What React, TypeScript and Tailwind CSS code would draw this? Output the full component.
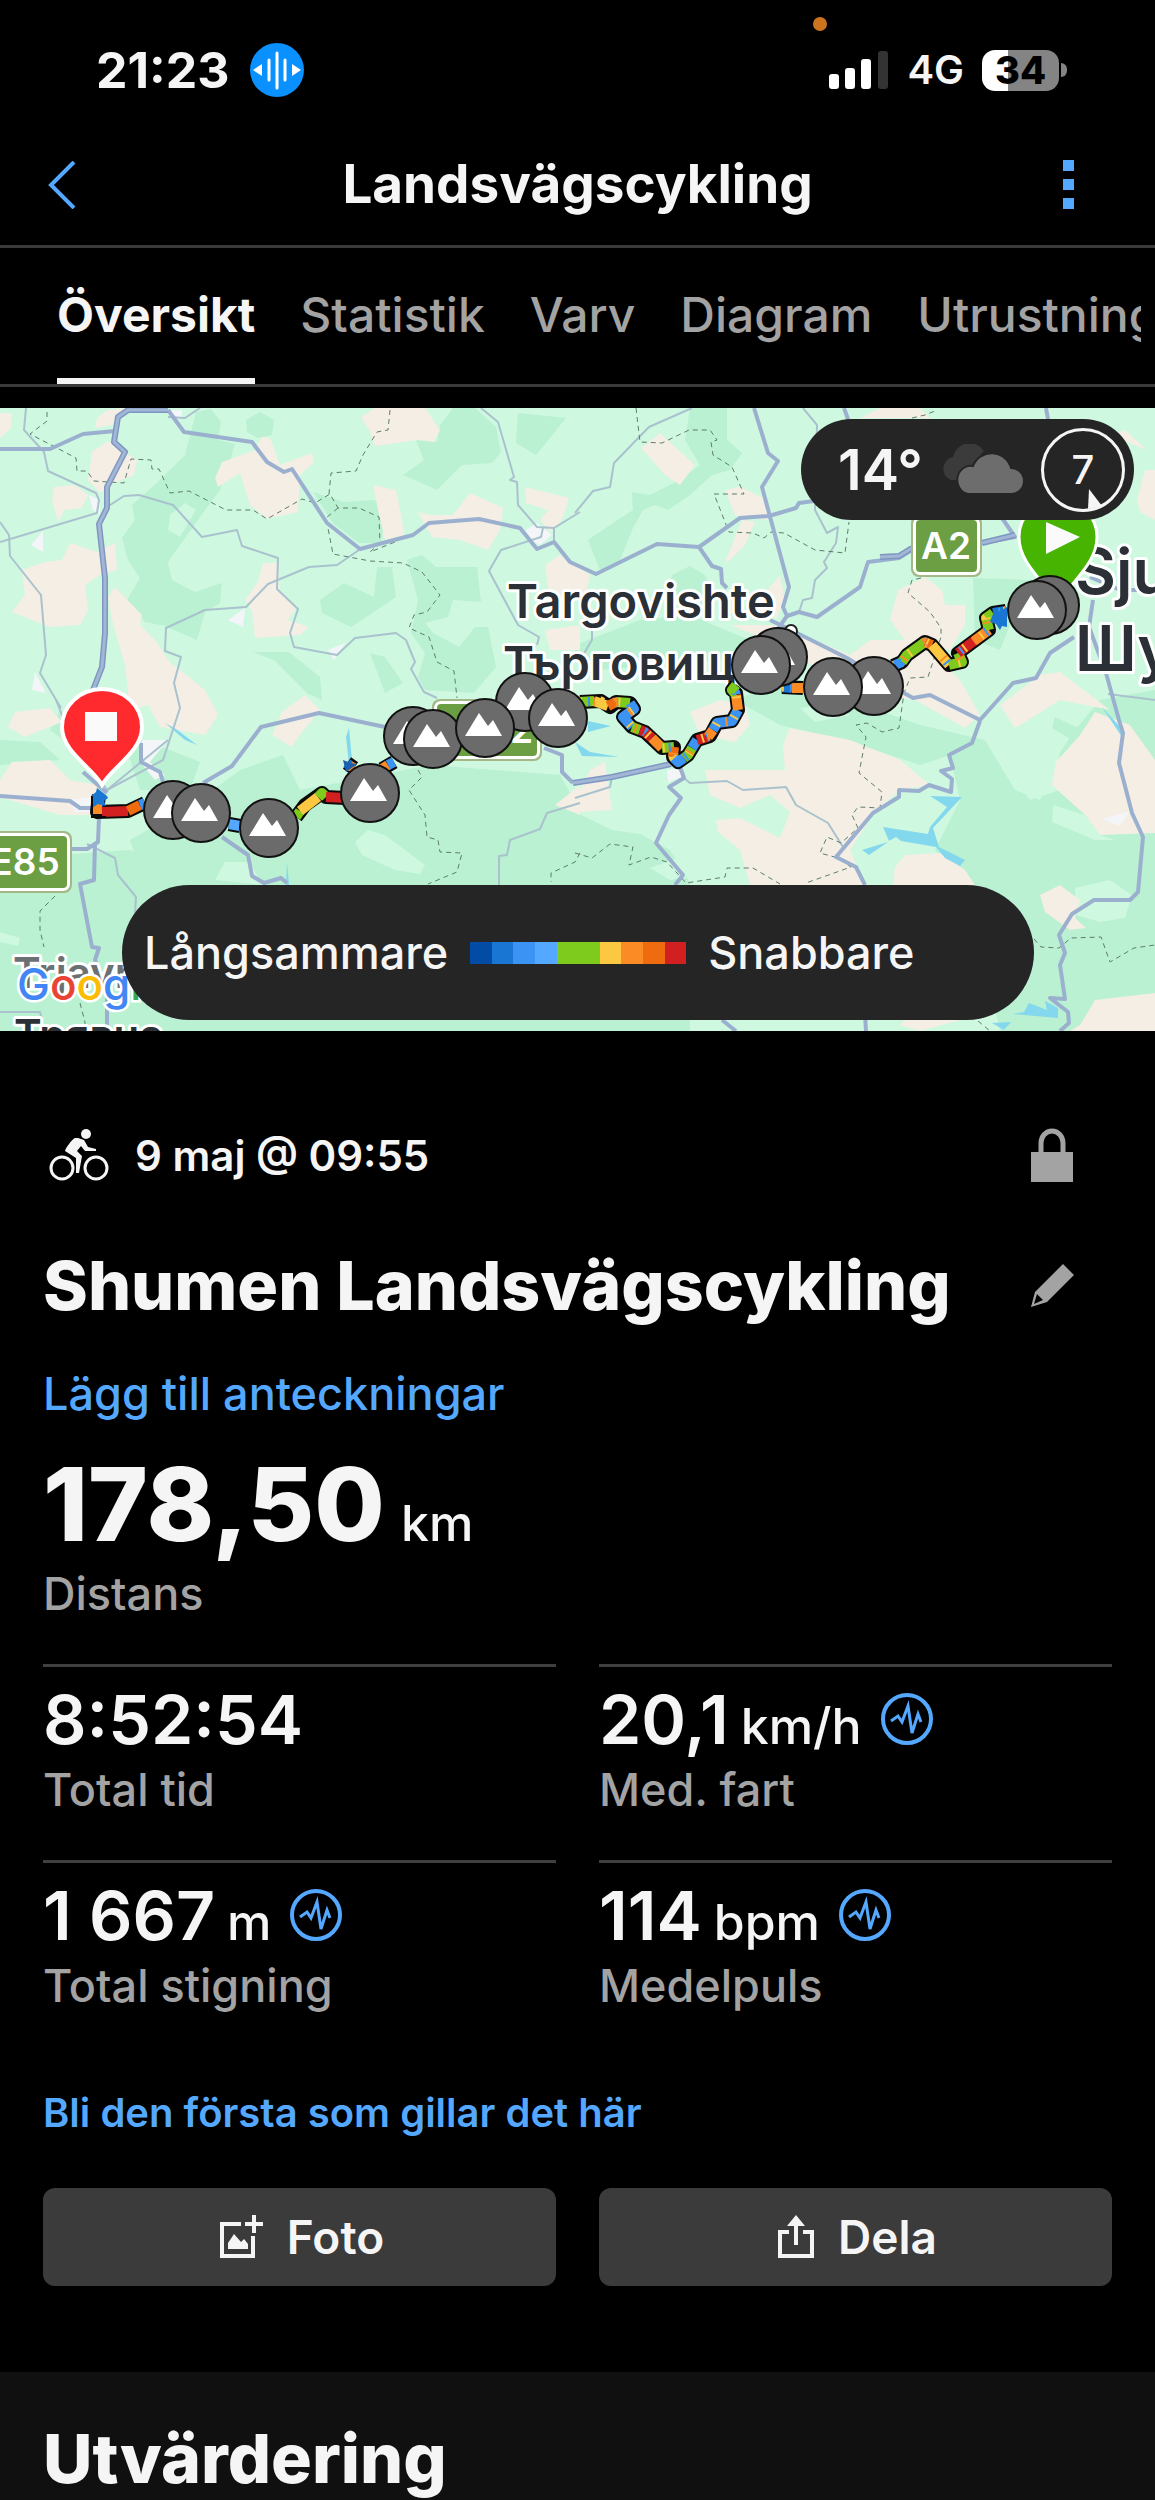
import { useState } from 'react'
import type { ReactNode } from 'react'

const TABS = ['Översikt', 'Statistik', 'Varv', 'Diagram', 'Utrustning']

const SPEED_SCALE = [
  '#024ca5',
  '#1976d2',
  '#3b94f3',
  '#54a8ff',
  '#7fcb1d',
  '#7fcb1d',
  '#fcc842',
  '#fb8b24',
  '#ee6b10',
  '#d21f1f',
]

// --- Map data, in map units (1155 wide) ---

const FOREST = [
  '196,412 211,409 221,422 218,440 235,444 228,468 220,490 205,510 180,545 168,562 172,580 195,592 222,583 220,603 205,612 197,640 165,626 145,622 127,600 140,578 128,560 122,538 135,520 132,505 158,482 185,455',
  '246,420 260,412 274,420 272,435 258,438 247,432',
  '416,440 437,442 440,425 453,408 475,408 496,427 501,452 492,463 462,465 437,490 403,475 424,460',
  '518,413 566,418 536,455 516,443',
  '313,492 344,502 374,500 385,510 381,543 359,543 333,523',
  '344,583 374,597 377,567 392,567 396,597 351,627 322,613 320,600',
  '407,560 422,555 436,567 477,567 481,602 453,600 448,617 425,623 433,633 459,647 475,627 488,627 496,667 474,693 425,690 418,677 425,653 411,633 418,600',
  '253,652 289,652 320,677 322,700 307,693 274,660',
  '370,653 385,657 403,683 385,693',
  '690,408 727,408 727,440 742,453 730,470 712,475 690,495 668,510 655,505 643,510 633,528 620,560 600,570 588,540 610,525 633,510 632,492 650,495 680,480 700,465 685,440',
  '575,645 640,620 690,615 730,632 750,640 720,660 600,670 575,655',
  '672,575 690,566 705,575 715,600 690,610 668,590',
  '973,578 1030,580 1045,600 1010,625 1000,650 975,640',
  '735,700 780,682 850,700 920,725 985,740 1030,800 1060,790 1055,760 1075,730 1100,700 1155,690 1155,1031 1000,1031 965,880 935,850 960,800 950,755 920,765 860,745 780,725',
  '575,812 612,830 640,834 670,850 690,883 690,1031 575,1031',
  '0,868 60,855 130,850 200,885 150,1031 0,1031',
  '130,840 200,800 240,770 283,755 300,790 380,775 430,765 560,775 580,810 580,1031 100,1031 150,900',
  '122,735 170,750 200,762 190,790 140,790',
  '60,710 75,720 70,745 50,730',
  '0,740 40,742 60,760 0,765',
  '1055,717 1093,735 1092,752 1052,728',
]

const MEADOW = [
  '355,842 368,830 385,835 425,865 420,874 395,870 362,855',
  '985,740 1010,715 1055,735 1060,760 1040,800 1015,790',
  '170,515 185,503 196,510 180,537 168,530',
  '0,932 20,938 18,946 0,942',
  '215,880 225,862 250,862 262,885',
  '650,868 700,850 712,860 700,875 670,880',
  '1053,805 1085,815 1100,835 1115,840 1095,840 1052,822',
  '1075,888 1110,880 1132,895 1125,918 1100,922 1076,915',
  '800,708 830,705 850,715 815,722',
]

const FIELDS = [
  '92,452 108,441 125,452 137,460 134,475 112,484 100,493 88,480',
  '54,487 75,485 88,495 82,508 65,510 58,522 52,500',
  '97,418 107,410 125,408 112,425 95,428',
  '0,413 12,413 11,428 0,438',
  '361,417 375,408 425,408 440,430 434,442 418,440 375,446 370,432',
  '215,478 222,462 255,450 262,437 270,438 280,465 312,453 314,462 300,475 298,512 267,519 250,505 240,473 218,487',
  '373,485 396,490 402,520 404,535 385,540 378,510',
  '418,512 430,515 453,515 470,493 503,508 500,530 488,550 460,540 432,537 425,525',
  '525,487 569,498 562,520 550,532 540,520 548,510 526,503',
  '70,543 97,552 115,543 117,570 100,575 85,585 88,610 80,625 50,627 12,612 25,595 22,570 45,562 62,560',
  '115,587 142,615 140,625 155,640 170,662 205,690 218,715 205,735 160,727 148,705 130,710 125,665 112,620 108,597',
  '263,563 278,563 280,590 297,607 288,620 309,627 300,635 255,638 252,612 245,600 258,582',
  '282,712 305,695 320,710 300,735 292,747 272,735',
  '545,565 560,555 590,575 585,600 550,600',
  '545,630 580,625 580,650 550,650',
  '15,712 50,708 62,722 25,737 8,727',
  '0,780 12,762 50,760 70,780 98,785 90,815 60,815 0,797',
  '641,448 660,433 695,465 680,485 665,475',
  '725,490 740,487 768,500 768,520 735,515',
  '725,562 742,520 755,522 745,545 730,560',
  '768,590 780,575 785,600 775,620',
  '890,620 898,590 925,577 942,590 945,605 965,605 965,625 950,650 905,640',
  '730,625 780,625 850,655 870,640 920,640 960,680 980,715 965,728 915,700 850,690 820,670 780,645',
  '1110,435 1125,430 1147,450',
  '1137,500 1145,470 1155,470 1155,520 1140,512',
  '1040,675 1060,672 1110,710 1060,700 1015,728 1000,705',
  '860,418 880,408 920,408 930,418',
  '790,728 850,740 900,760 930,785 900,790 875,812 850,850 865,885 750,885 740,850 718,832 716,820 740,818 780,838 790,812 770,795 740,808 710,795 705,770 785,770 783,745',
  '895,867 905,855 940,853 965,870 975,885 893,885',
  '1052,785 1056,762 1080,735 1095,712 1130,725 1155,760 1155,833 1100,835 1085,815',
  '1040,895 1060,885 1080,900 1075,918 1086,928 1070,930 1045,912',
  '1080,1025 1095,1000 1155,993 1155,1031 1070,1031',
  '690,712 720,700 745,705 750,725 735,742 700,735',
  '575,800 590,770 605,762 612,810 580,812',
  '555,805 580,785 580,815',
  '905,1020 960,1020 920,1031 900,1025',
]

const TOWNS = [
  '31,545 43,531 43,552',
  '228,620 245,608 243,627',
  '328,650 345,643 334,660',
  '526,530 537,523 552,535 540,545 527,538',
  '89,495 100,500 100,515 93,510',
  '168,410 182,410 182,418 172,420',
  '32,690 35,672 46,693',
  '142,740 168,740 150,762 165,775 155,780 140,762',
  '667,770 680,768 684,776 668,782',
  '1102,819 1130,811 1120,826',
  '70,800 90,797 90,812 75,812',
]

const LAKES = [
  '165,723 176,729 197,745 185,740',
  '346,737 349,728 352,760 349,765',
  '287,862 289,885 286,885',
  '930,796 962,797 933,828 939,847 965,860 960,866 945,858 936,847 901,841 896,837 889,841 883,827 928,834 930,827 947,807',
  '862,850 888,842 869,855',
  '1102,707 1123,730 1122,737',
  '1013,1014 1024,1012 1029,1003 1047,1010 1045,1001 1058,1008 1058,1018',
  '992,1023 1011,1022 1004,1030',
  '588,721 611,726 588,732',
  '575,742 590,752 619,757 582,756',
]

const MINOR_ROADS = [
  '26,408 24,430 44,452 48,471 96,493 99,500 97,513 0,542',
  '0,522 9,535 10,556 41,595 46,655 40,673 61,708',
  '107,507 124,496 139,495 173,505 202,537 237,530 242,546 278,558 277,589 298,609 290,633 294,647 337,655 355,638 396,633 406,640 415,662 411,669 424,692 437,698',
  '359,550 337,565 309,567 268,584 246,607 205,610 166,628 165,651 181,657 174,683 180,708 163,760 107,790',
  '481,408 498,422 514,477 510,480 517,482 518,505 537,527 554,528 554,542',
  '554,528 580,512',
  '543,528 541,537 501,550 489,571 518,625 539,637 537,645',
  '168,417 185,418 200,408',
  '56,700 70,735 107,790 168,740',
  '87,844 115,858 118,875 136,897 135,913',
  '580,803 547,813 540,829 510,840 507,855 499,856 499,885',
  '684,778 690,783 727,781 743,790 786,787 796,805 828,823 843,847',
  '692,408 649,427 614,463 610,487 593,491 575,513',
  '803,408 817,425 815,510 827,533 838,527 836,543 824,562 827,568 815,580 812,598 803,600 799,612',
  '575,798 610,787 612,777',
  '592,620 592,640 580,660',
  '1108,694 1155,700',
  '0,1012 40,1012 42,1020',
]

const MAJOR_ROADS = [
  '0,449 50,449 83,434 115,431',
  '168,410 184,432 252,442 267,462 284,472 292,469 327,523 360,549 413,535 429,523 479,519 520,528 537,549 554,542 570,562 596,574 657,544 699,547 740,518 769,516 796,508 799,503 814,501',
  '754,408 768,453 778,461 762,487 789,587 783,607 787,616 770,640',
  '699,547 712,566 721,569 722,583 727,588',
  '787,616 799,612 817,617 860,587 868,562 899,558 912,550 982,543 1015,537 1000,515',
  '844,408 852,430',
  '1046,408 1050,430',
  '770,620 797,633 847,658 904,693 913,698 930,695 980,720 1013,683 1036,678 1050,653 1074,637',
  '1093,600 1089,627 1106,673 1119,720 1123,733 1119,763 1132,813 1143,837 1138,892 1130,900 1094,900 1072,914 1059,935 1065,953 1060,965 1065,999 1050,998 1068,1012 1069,1023 1060,1031',
  '980,721 972,743 949,755 953,768 941,771 952,779 951,792 929,785 919,791 899,790 899,797 873,813 836,857 856,867 865,885',
  '680,767 684,778 669,787 681,798 669,815 656,843 683,875 675,885',
  '0,796 70,801 80,808 92,808',
  '99,817 98,842 87,849 70,849',
  '95,843 94,880 80,884 92,947 99,948 95,960 107,990 107,1031',
  '141,743 141,762 160,772 163,782',
  '83,772 107,793',
  '203,783 232,766 261,727 319,713 385,727',
  '222,837 248,855 252,876 264,883 281,878 287,883',
  '544,748 562,755 562,772 573,783',
  '722,1020 736,1031',
  '865,1015 866,1031',
  '1090,577 1120,590 1155,590',
]

const HIGHWAYS = [
  '168,410 128,410 118,417 114,442 125,452 107,487 107,508 99,524 105,578 105,633 102,667 93,690',
  '573,783 612,777 671,764',
  '880,557 899,556 912,548',
  '982,543 1015,535',
]

const BORDERS = [
  '47,412 47,421 30,434 76,458 77,471 87,471 94,481 124,483 131,459 151,460 152,469 159,469 170,493 189,491 226,510 253,510 267,519 302,499 315,503 330,494 338,508 359,508 379,517 380,543 370,552 395,542',
  '390,410 388,430 377,432 363,455 356,471 331,473 329,494',
  '338,508 326,518 333,554 370,561 403,563 422,572 440,595 427,612 414,615 409,628 429,637 437,662 454,671 457,698',
  '636,408 640,442 662,443 689,430 710,430 717,440 711,442 713,455 732,467 744,494 714,494 729,532 753,533 764,538 771,532 784,533 815,550 845,553 849,522',
  '921,578 912,580 908,593 930,612 941,628 941,637 928,677 910,678 904,693 899,728 882,732 867,723 856,725 866,737 859,773 882,792 880,808 858,807 852,815 858,828 841,843 827,837 820,853 838,858 851,867 806,883',
  '575,853 592,858 610,844 633,847 629,865 651,857 667,862 686,883 725,877 727,868 753,868 780,884',
  '1034,939 1041,947 1059,948 1071,938 1101,937 1110,962 1134,948 1155,945',
  '418,770 422,777 409,790 425,815 427,837 438,840 440,852 462,853 457,872 428,884',
  '55,896 40,911 40,930 44,947',
  '80,1003 85,1022 85,1031',
  '580,853 575,862 551,873 551,882',
  '912,418 925,415 935,411',
  '978,1021 990,1031',
]

type Leg = { points: string; color: string }

const TRACK_OUTLINE = [
  '99,795 97,812 128,811 145,803',
  '229,824 240,826',
  '296,817 305,805 322,793 326,797 345,798',
  '347,763 354,768',
  '382,769 394,762',
  '580,702 601,701 610,707 616,702 630,703 634,709 623,717 632,727 645,732 662,748 674,747 673,757 678,762 688,755 697,740 710,736 717,723 732,721 738,710 736,693 732,690 736,685',
  '782,687 803,688',
  '893,666 902,662 907,655 925,642 932,645 949,665 962,662 958,653 989,630 986,618 993,613 1006,611',
]

const TRACK_LEGS: Leg[] = [
  { points: '99,795 98,806', color: '#1976d2' },
  { points: '97,804 97,814', color: '#fb8b24' },
  { points: '102,812 128,811', color: '#d21f1f' },
  { points: '128,811 140,805', color: '#ee6b10' },
  { points: '140,805 145,803', color: '#3b94f3' },
  { points: '229,824 240,826', color: '#54a8ff' },
  { points: '296,817 300,811', color: '#7fcb1d' },
  { points: '300,811 318,797', color: '#fcc842' },
  { points: '318,797 322,793 326,797', color: '#7fcb1d' },
  { points: '326,797 345,798', color: '#d21f1f' },
  { points: '347,763 350,766', color: '#1976d2' },
  { points: '350,766 354,768', color: '#fb8b24' },
  { points: '382,769 388,765', color: '#fb8b24' },
  { points: '388,765 394,762', color: '#3b94f3' },
  { points: '580,702 594,701', color: '#7fcb1d' },
  { points: '594,701 608,706', color: '#fcc842' },
  { points: '608,706 616,702', color: '#ee6b10' },
  { points: '616,702 630,703', color: '#7fcb1d' },
  { points: '630,703 634,709 623,717 632,727', color: '#3b94f3' },
  { points: '632,727 640,730', color: '#7fcb1d' },
  { points: '640,730 645,732 652,738', color: '#d21f1f' },
  { points: '652,738 662,748', color: '#fb8b24' },
  { points: '662,748 674,747', color: '#7fcb1d' },
  { points: '674,747 673,757', color: '#ee6b10' },
  { points: '673,757 678,762 684,758', color: '#3b94f3' },
  { points: '684,758 688,755 692,748', color: '#7fcb1d' },
  { points: '692,748 697,740', color: '#3b94f3' },
  { points: '697,740 708,737', color: '#d21f1f' },
  { points: '708,737 713,730', color: '#fb8b24' },
  { points: '713,730 717,723 732,721 738,710', color: '#3b94f3' },
  { points: '738,710 736,695', color: '#fb8b24' },
  { points: '736,695 732,690 736,685', color: '#7fcb1d' },
  { points: '782,687 792,688', color: '#1976d2' },
  { points: '792,688 803,688', color: '#fb8b24' },
  { points: '893,666 902,662', color: '#3b94f3' },
  { points: '902,662 907,655 925,642', color: '#7fcb1d' },
  { points: '925,642 932,645', color: '#ee6b10' },
  { points: '932,645 949,665', color: '#fcc842' },
  { points: '949,665 962,662 958,653', color: '#7fcb1d' },
  { points: '958,653 974,641', color: '#d21f1f' },
  { points: '974,641 989,630', color: '#fb8b24' },
  { points: '989,630 986,618 993,613', color: '#7fcb1d' },
  { points: '993,613 1006,611', color: '#1976d2' },
]

const SUMMITS: [number, number][] = [
  [173, 810],
  [201, 813],
  [269, 828],
  [370, 793],
  [413, 736],
  [433, 739],
  [525, 702],
  [485, 728],
  [558, 718],
  [778, 657],
  [761, 665],
  [874, 686],
  [833, 687],
  [1050, 605],
  [1037, 610],
]

function Lines({ items, ...rest }: { items: string[]; stroke: string; strokeWidth: number; strokeDasharray?: string }) {
  return (
    <g fill="none" strokeLinejoin="round" {...rest}>
      {items.map((points) => (
        <polyline key={points} points={points} />
      ))}
    </g>
  )
}

function Areas({ items, fill }: { items: string[]; fill: string }) {
  return (
    <g fill={fill}>
      {items.map((points) => (
        <polygon key={points} points={points} />
      ))}
    </g>
  )
}

function RoadSign({ x, y, width, textX, children }: { x: number; y: number; width: number; textX: number; children: string }) {
  return (
    <g>
      <rect x={x} y={y} width={width} height={62} rx={8} fill="#a3b886" />
      <rect x={x + 2} y={y + 2} width={width - 4} height={58} rx={7} fill="#fff" />
      <rect x={x + 5} y={y + 5} width={width - 10} height={52} rx={4} fill="#6c9f43" />
      <text x={textX} y={y + 44} fill="#fff" fontSize={37} fontWeight={600} textAnchor="middle">
        {children}
      </text>
    </g>
  )
}

function RouteMap() {
  return (
    <svg
      viewBox="0 408 1155 623"
      className="block w-full font-['Inter',sans-serif]"
      role="img"
      aria-label="Karta över rutten"
    >
      <rect x={0} y={408} width={1155} height={623} fill="#cff8e1" />
      <Areas items={FOREST} fill="#b9f1d2" />
      <Areas items={MEADOW} fill="#cff8e1" />
      <Areas items={FIELDS} fill="#f4eee4" />
      <Areas items={TOWNS} fill="#f3f5f8" />
      <Areas items={LAKES} fill="#84d8ee" />
      <Lines items={MINOR_ROADS} stroke="#a9c2cd" strokeWidth={2} />
      <Lines items={BORDERS} stroke="#5f7d6d" strokeWidth={1} strokeDasharray="5 4" />
      <Lines items={MAJOR_ROADS} stroke="#9bb0cf" strokeWidth={4} />
      <Lines items={HIGHWAYS} stroke="#7f97c0" strokeWidth={6} />
      <Lines items={HIGHWAYS} stroke="#a2b6d6" strokeWidth={3} />

      <RoadSign x={911} y={515} width={71} textX={946}>
        A2
      </RoadSign>
      <RoadSign x={-20} y={831} width={92} textX={25}>
        E85
      </RoadSign>
      <RoadSign x={432} y={699} width={110} textX={508}>
        A2
      </RoadSign>

      <g fill="#2b2f36" stroke="#fff" strokeWidth={6} strokeLinejoin="round" paintOrder="stroke" fontWeight={600}>
        <text x={507} y={618} fontSize={47}>
          Targovishte
        </text>
        <text x={503} y={680} fontSize={47}>
          Търговище
        </text>
        <text x={1075} y={594} fontSize={63}>
          Sjumen
        </text>
        <text x={1075} y={671} fontSize={63}>
          Шумен
        </text>
        <g fontSize={42}>
          <text x={13} y={988} fill="#6b7073">
            Trjavna
          </text>
          <text x={14} y={1050}>
            Трявна
          </text>
        </g>
      </g>
      <text x={17} y={1000} fontSize={44} fontWeight={500} stroke="#fff" strokeWidth={5} paintOrder="stroke">
        <tspan fill="#4285f4">G</tspan>
        <tspan fill="#ea4335">o</tspan>
        <tspan fill="#fbbc04">o</tspan>
        <tspan fill="#4285f4">g</tspan>
        <tspan fill="#34a853">l</tspan>
        <tspan fill="#ea4335">e</tspan>
      </text>

      <circle cx={791} cy={631} r={6} fill="#fff" stroke="#222" strokeWidth={2} />
      <g strokeLinejoin="miter">
        <Lines items={TRACK_OUTLINE} stroke="#0a0a0a" strokeWidth={14} />
      </g>
      <g fill="none" strokeWidth={10} strokeLinejoin="round">
        {TRACK_LEGS.map((leg) => (
          <polyline key={leg.points} points={leg.points} stroke={leg.color} />
        ))}
      </g>
      <Lines items={TRACK_OUTLINE.slice(5)} stroke="#fcc842" strokeWidth={9} strokeDasharray="2 19" />
      <Lines items={TRACK_OUTLINE.slice(5)} stroke="#3b94f3" strokeWidth={9} strokeDasharray="0 8 2 21" />
      <Lines items={TRACK_OUTLINE.slice(5)} stroke="#fb8b24" strokeWidth={9} strokeDasharray="0 13 2 11" />
      <path d="M91 796l5-4 1-4 5 4 5 4 1 2-4 3 2 5-8-2-6 4z" fill="#1976d2" />
      <path d="M92 796v21h14" fill="none" stroke="#0a0a0a" strokeWidth={2} />
      <path d="M343 760l8 3 6 1-4 3-7 5z" fill="#1b5fae" />
      <path d="M990 622l3-8 9-4 5-3v20l-5-1-2 4-4-6z" fill="#1976d2" />

      {/* finish */}
      <path
        d="M102 785C92 767 62 752 62 727a40 38 0 0 1 80 0c0 25-30 40-40 58z"
        fill="#ff2a2d"
        stroke="#fff"
        strokeWidth={4}
      />
      <rect x={85} y={712} width={32} height={29} fill="#fafafa" />

      {/* start */}
      <path
        d="M1058 606C1050 585 1019 566 1019 537a39 38 0 0 1 78 0c0 29-31 48-39 69z"
        fill="#46b400"
        stroke="#fff"
        strokeWidth={3}
      />
      <path d="M1046 522l34 15-34 17z" fill="#fafafa" />

      {SUMMITS.map(([x, y]) => (
        <g key={`${x}:${y}`} transform={`translate(${x} ${y})`}>
          <circle r={29} fill="#6b6b6b" stroke="#111" strokeWidth={2} />
          <path d="M-20 8L-6-15 3-2 8-8 17 8z" fill="#fff" />
        </g>
      ))}
    </svg>
  )
}

function PulseIcon() {
  return (
    <svg viewBox="0 0 54 54" className="size-[54px] self-center" fill="none" stroke="#54a8ff" aria-hidden="true">
      <circle cx={27} cy={27} r={24} strokeWidth={4} />
      <path d="M11 29l7-5 4 6 6-16 4 27 6-19 3 8" strokeWidth={3} />
    </svg>
  )
}

function CyclistIcon() {
  return (
    <svg viewBox="0 0 60 52" className="h-[52px] w-[60px]" aria-hidden="true">
      <g fill="none" stroke="#f5f5f5" strokeWidth={3}>
        <circle cx={13} cy={39} r={11} />
        <circle cx={47} cy={39} r={11} />
      </g>
      <circle cx={37} cy={5} r={5} fill="#f5f5f5" />
      <path
        d="M29 9l6 2 4 7 8 2v2H36l-4-5-4 5 5 5-3 17h-3V29l-11-7c0-2 7-12 10-13z"
        fill="#f5f5f5"
      />
    </svg>
  )
}

function StatusBar() {
  return (
    <div className="relative flex h-[124px] items-center justify-between pt-4 pr-[88px] pl-[96px]">
      <span className="absolute top-[17px] left-[71%] size-3.5 -translate-x-1/2 rounded-full bg-[#cc7320]" />
      <div className="flex items-center gap-5">
        <span className="text-[50px] font-bold">21:23</span>
        <svg viewBox="0 0 54 54" className="size-[54px]" aria-hidden="true">
          <circle cx={27} cy={27} r={27} fill="#0a91ff" />
          <path d="M3 27l9-6v12zM51 27l-9-6v12z" fill="#fff" />
          <path d="M19 17v20M27 10v35M35 17v20" stroke="#fff" strokeWidth={3} strokeLinecap="round" />
        </svg>
      </div>
      <div className="flex items-center gap-[18px]">
        <svg viewBox="0 0 60 40" className="h-10 w-[60px]" fill="#fff" aria-hidden="true">
          <rect x={0} y={24} width={10} height={15} rx={3} />
          <rect x={16} y={18} width={10} height={21} rx={3} />
          <rect x={32} y={9} width={10} height={30} rx={3} />
          <rect x={49} y={1} width={10} height={38} rx={3} fill="#333" />
        </svg>
        <span className="text-[40px] font-semibold">4G</span>
        <div className="flex items-center gap-0.5">
          <span className="flex h-[41px] w-[77px] items-center justify-center rounded-[13px] bg-linear-to-r from-white from-34% to-[#848484] to-34% text-[38px] font-extrabold text-black">
            34
          </span>
          <span className="h-3.5 w-1.5 rounded-r-full bg-[#848484]" />
        </div>
      </div>
    </div>
  )
}

function Header() {
  return (
    <header className="flex h-[124px] items-center justify-between border-b-3 border-[#3a3a3a] px-12">
      <button type="button" aria-label="Tillbaka" className="w-12">
        <svg viewBox="0 0 28 48" className="h-12 w-7" fill="none" stroke="#54a8ff" strokeWidth={4}>
          <path d="M26 1L3 24l23 23" />
        </svg>
      </button>
      <h1 className="text-[53px] font-bold">Landsvägscykling</h1>
      <button type="button" aria-label="Mer" className="flex w-12 flex-col items-start gap-2 pl-1">
        <span className="size-[11px] bg-[#54a8ff]" />
        <span className="size-[11px] bg-[#54a8ff]" />
        <span className="size-[11px] bg-[#54a8ff]" />
      </button>
    </header>
  )
}

function Tabs() {
  const [active, setActive] = useState(TABS[0])

  return (
    <nav className="h-[139px] border-b-3 border-[#3a3a3a] pr-3.5 pl-[57px]">
      <div role="tablist" className="flex h-full gap-[45px] overflow-hidden">
        {TABS.map((tab) => (
          <button
            key={tab}
            type="button"
            role="tab"
            aria-selected={tab === active}
            onClick={() => setActive(tab)}
            className={`shrink-0 border-b-6 pt-1 text-[48px] ${
              tab === active ? 'border-[#f5f5f5] font-bold' : 'border-transparent font-medium text-[#a3a3a3]'
            }`}
          >
            {tab}
          </button>
        ))}
      </div>
    </nav>
  )
}

function WeatherBadge() {
  return (
    <div className="absolute top-[11px] right-[21px] flex h-[101px] w-[333px] items-center justify-end gap-4 rounded-full bg-[#252525] pr-[9px]">
      <span className="text-[56px] font-semibold">14°</span>
      <svg viewBox="0 0 86 52" className="h-[52px] w-[86px]" aria-hidden="true">
        <path d="M12 36a12 12 0 0 1 2-23 17 17 0 0 1 31-6L20 36z" fill="#3b3b3b" />
        <path
          d="M29 50a13 14 0 0 1 5-28 20 20 0 0 1 38 2 13 13 0 0 1 0 26z"
          fill="#6d6d6d"
          stroke="#252525"
          strokeWidth={2}
        />
      </svg>
      <div className="relative flex size-[84px] items-center justify-center rounded-full border-3 border-[#f5f5f5]">
        <span className="text-[40px] font-medium">7</span>
        <svg viewBox="0 0 14 20" className="absolute right-5 bottom-0 h-5 w-3.5" aria-hidden="true">
          <path d="M1 0l13 17-14 3z" fill="#f5f5f5" />
        </svg>
      </div>
    </div>
  )
}

function SpeedLegend() {
  return (
    <div className="absolute bottom-[11px] left-[122px] flex h-[135px] w-[912px] items-center gap-[22px] rounded-full bg-[#252525] pl-[22px] text-[45px] font-medium">
      <span>Långsammare</span>
      <div className="flex w-[216px]">
        {SPEED_SCALE.map((color, i) => (
          <span key={i} className="h-[22px] flex-1" style={{ backgroundColor: color }} />
        ))}
      </div>
      <span>Snabbare</span>
    </div>
  )
}

function Stat({ value, unit, label, pulse }: { value: string; unit?: string; label: string; pulse?: boolean }) {
  return (
    <div className="border-t-3 border-[#3f3f3f] pt-4 pb-11">
      <div className="flex h-[72px] items-baseline text-[68px]/[72px] font-semibold">
        {value}
        {unit && <span className="ml-3 text-[50px]/[72px] font-medium">{unit}</span>}
        {pulse && (
          <span className="ml-[18px] flex self-center">
            <PulseIcon />
          </span>
        )}
      </div>
      <div className="mt-[9px] text-[45px]/[52px] font-medium text-[#a3a3a3]">{label}</div>
    </div>
  )
}

function ActionButton({ icon, children }: { icon: ReactNode; children: ReactNode }) {
  return (
    <button
      type="button"
      className="flex h-[98px] items-center justify-center gap-6 rounded-xl bg-[#3b3b3b] pl-1 text-[46px] font-semibold"
    >
      {icon}
      {children}
    </button>
  )
}

function ActivityDetails() {
  return (
    <main className="px-[43px] pt-[94px] pb-[86px]">
      <div className="flex h-[60px] items-center justify-between pr-[39px] pl-1.5">
        <div className="flex items-center gap-[26px] text-[42px] font-semibold">
          <CyclistIcon />
          9 maj @ 09:55
        </div>
        <svg viewBox="0 0 42 54" className="h-[54px] w-[42px]" aria-hidden="true">
          <path d="M10 26V15a11 12 0 0 1 22 0v11" fill="none" stroke="#a3a3a3" strokeWidth={5} />
          <path d="M0 24h42v30H0z" fill="#a3a3a3" />
        </svg>
      </div>

      <div className="mt-[60px] flex h-20 items-center justify-between pr-[38px]">
        <h2 className="text-[68px]/[80px] font-extrabold whitespace-nowrap">Shumen Landsvägscykling</h2>
        <button type="button" aria-label="Redigera namn" className="shrink-0">
          <svg viewBox="0 0 43 43" className="size-[43px]" fill="#a3a3a3">
            <path d="M32 0l11 11-27 27L0 43l4-15zM6 30l-3 10 9-4z" fillRule="evenodd" />
          </svg>
        </button>
      </div>

      <a href="#anteckningar" className="mt-[41px] block text-[45px]/[56px] font-medium text-[#54a8ff]">
        Lägg till anteckningar
      </a>

      <div className="mt-8 flex h-[100px] items-baseline gap-4 text-[102px]/[100px] font-extrabold">
        178,50
        <span className="text-[50px] font-medium">km</span>
      </div>
      <div className="mt-3 text-[45px]/[56px] font-medium text-[#a3a3a3]">Distans</div>

      <div className="mt-[42px] grid grid-cols-2 gap-x-[43px]">
        <Stat value="8:52:54" label="Total tid" />
        <Stat value="20,1" unit="km/h" label="Med. fart" pulse />
        <Stat value="1 667" unit="m" label="Total stigning" pulse />
        <Stat value="114" unit="bpm" label="Medelpuls" pulse />
      </div>

      <a href="#gilla" className="mt-8 block text-[40px]/[50px] font-semibold text-[#54a8ff]">
        Bli den första som gillar det här
      </a>

      <div className="mt-[50px] grid grid-cols-2 gap-x-[43px]">
        <ActionButton
          icon={
            <svg viewBox="0 0 44 44" className="size-11" aria-hidden="true">
              <path d="M22 9H3v32h31V21" fill="none" stroke="#f5f5f5" strokeWidth={4} />
              <path d="M9 34V28l6-9 7 8 3-3 4 5v5z" fill="#f5f5f5" />
              <path d="M35 0v18M26 9h18" stroke="#f5f5f5" strokeWidth={4} />
            </svg>
          }
        >
          Foto
        </ActionButton>
        <ActionButton
          icon={
            <svg viewBox="0 0 36 44" className="h-11 w-9" aria-hidden="true">
              <path d="M11 17H2v24h32V17h-9M18 30V6" fill="none" stroke="#f5f5f5" strokeWidth={4} />
              <path d="M18 0l9 11H9z" fill="#f5f5f5" />
            </svg>
          }
        >
          Dela
        </ActionButton>
      </div>
    </main>
  )
}

export default function App() {
  return (
    <div className="flex min-h-screen flex-col overflow-x-hidden bg-black font-['Inter',sans-serif] text-[#f5f5f5]">
      <StatusBar />
      <Header />
      <Tabs />
      <section className="relative mt-[21px]">
        <RouteMap />
        <WeatherBadge />
        <SpeedLegend />
      </section>
      <ActivityDetails />
      <section className="flex-1 bg-[#101010] px-[43px] pt-[46px]">
        <h2 className="text-[68px]/[80px] font-extrabold">Utvärdering</h2>
      </section>
    </div>
  )
}
